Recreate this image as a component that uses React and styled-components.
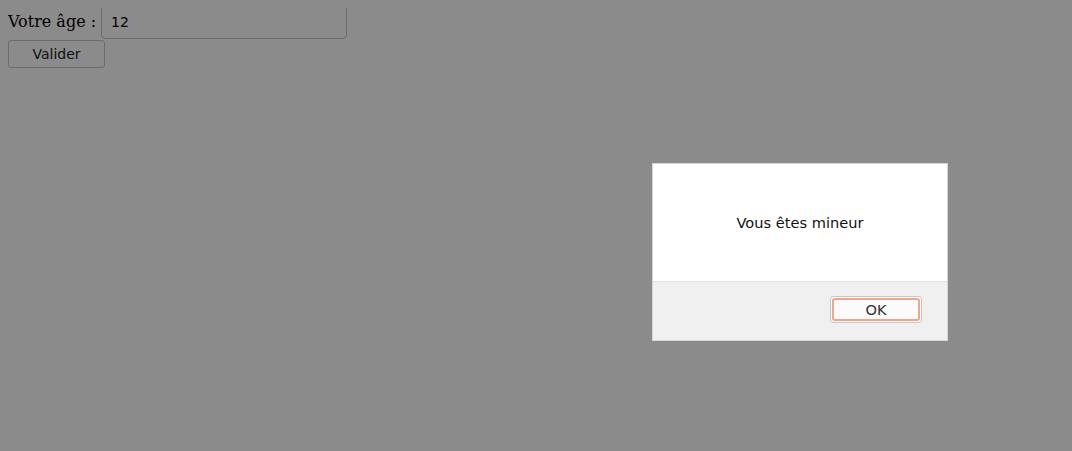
import React from 'react';
import styled, { createGlobalStyle } from 'styled-components';

const GlobalStyle = createGlobalStyle`
  html, body {
    margin: 0;
    background: #ffffff;
  }
  body {
    margin: 8px;
    font-family: 'DejaVu Serif', serif;
    font-size: 16px;
  }
`;

const Form = styled.form`
  display: flex;
  flex-direction: column;
  align-items: flex-start;
`;

const Row = styled.div`
  display: flex;
  align-items: center;
  margin-top: -3px;
`;

const Label = styled.label`
  color: #000;
  margin-right: 5px;
  line-height: 20px;
`;

const Input = styled.input`
  box-sizing: border-box;
  width: 246px;
  height: 34px;
  padding: 0 9px;
  border: 1px solid #c4c4c4;
  border-radius: 4px;
  background: #fff;
  color: #000;
  font-family: 'DejaVu Sans', sans-serif;
  font-size: 14px;
  outline: none;
`;

const Button = styled.button`
  box-sizing: border-box;
  width: 97px;
  height: 28px;
  margin-top: 1px;
  border: 1px solid #c4c4c4;
  border-radius: 3px;
  background: #fff;
  color: #222;
  font-family: 'DejaVu Sans', sans-serif;
  font-size: 14px;
`;

const Overlay = styled.div`
  position: fixed;
  inset: 0;
  background: rgba(0, 0, 0, 0.455);
`;

const Dialog = styled.div`
  position: fixed;
  left: 652px;
  top: 163px;
  width: 296px;
  box-sizing: border-box;
  border: 1px solid #d6d6d6;
  background: #fff;
  display: flex;
  flex-direction: column;
  font-family: 'DejaVu Sans', sans-serif;
`;

const Message = styled.div`
  height: 117px;
  display: flex;
  align-items: center;
  justify-content: center;
  font-size: 14.6px;
  color: #111;
  box-sizing: border-box;
`;

const Footer = styled.div`
  height: 59px;
  background: #f0f0f0;
  border-top: 1px solid #e2e2e2;
  box-sizing: border-box;
  display: flex;
  align-items: center;
  justify-content: flex-end;
  padding: 0 25px 4px 0;
`;

const OkButton = styled.button`
  position: relative;
  box-sizing: border-box;
  width: 92px;
  height: 27px;
  border: 1px solid #c8c8c8;
  border-radius: 3px;
  background: #fbfbfb;
  color: #333;
  font-family: 'DejaVu Sans', sans-serif;
  font-size: 14.6px;
  padding: 0;

  &::after {
    content: '';
    position: absolute;
    inset: 1px;
    border: 2px solid #f1a58a;
    border-radius: 3px;
  }
`;

export default function App() {
  return (
    <>
      <GlobalStyle />
      <Form onSubmit={(e) => e.preventDefault()}>
        <Row>
          <Label htmlFor="age">Votre âge :</Label>
          <Input id="age" defaultValue="12" />
        </Row>
        <Button type="submit">Valider</Button>
      </Form>
      <Overlay />
      <Dialog role="alertdialog">
        <Message>Vous êtes mineur</Message>
        <Footer>
          <OkButton>OK</OkButton>
        </Footer>
      </Dialog>
    </>
  );
}
